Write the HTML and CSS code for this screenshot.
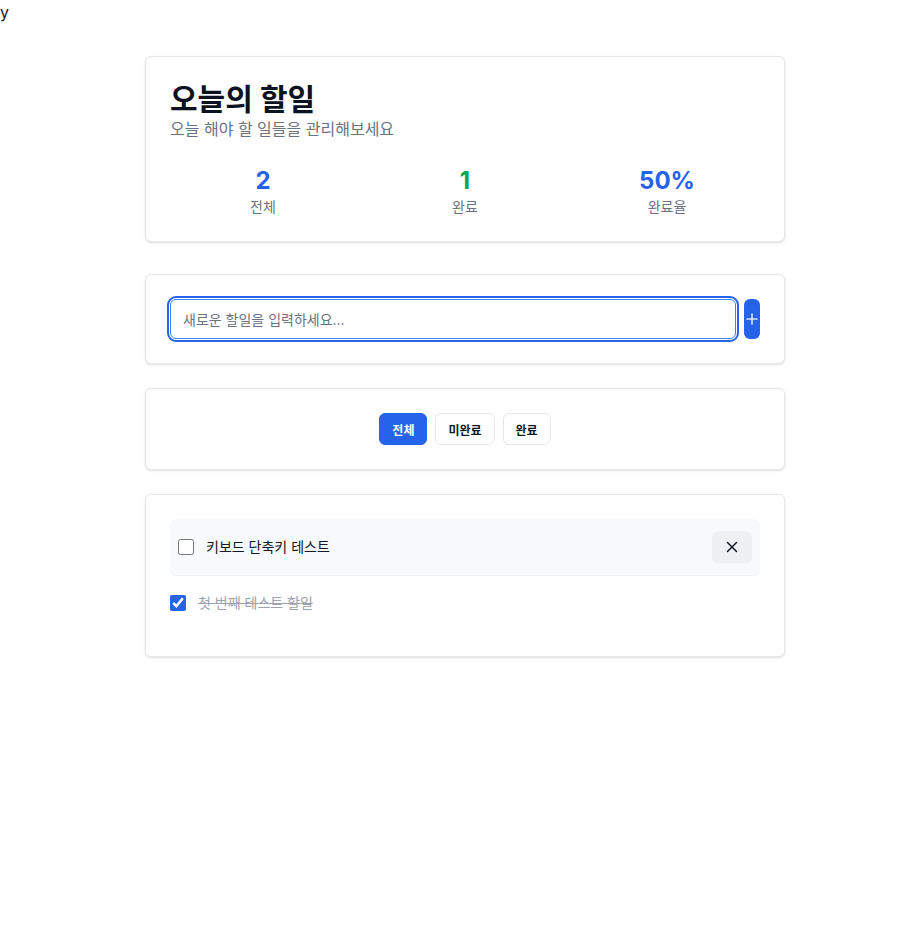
FILE: index.html
```html
<!DOCTYPE html>
<html lang="ko">
<head>
<meta charset="utf-8">
<title>오늘의 할일</title>
<link rel="stylesheet" href="styles.css">
</head>
<body>
<div class="stray">y</div>
<div class="page">
  <main class="container">
    <section class="card header-card">
      <div class="header">
        <h1 class="title">오늘의 할일</h1>
        <p class="subtitle">오늘 해야 할 일들을 관리해보세요</p>
      </div>
      <div class="stats">
        <div class="stat">
          <div class="stat-num blue">2</div>
          <div class="stat-label">전체</div>
        </div>
        <div class="stat">
          <div class="stat-num green">1</div>
          <div class="stat-label">완료</div>
        </div>
        <div class="stat">
          <div class="stat-num blue">50%</div>
          <div class="stat-label">완료율</div>
        </div>
      </div>
    </section>

    <section class="card">
      <form class="add-form">
        <input class="add-input" type="text" placeholder="새로운 할일을 입력하세요..." autofocus>
        <button class="add-btn" type="button" aria-label="추가">
          <svg width="12" height="12" viewBox="0 0 12 12" fill="none" stroke="#dbe6ff" stroke-width="1.6" stroke-linecap="round"><path d="M6 1v10M1 6h10"/></svg>
        </button>
      </form>
    </section>

    <section class="card">
      <div class="filters">
        <button class="filter active" type="button">전체</button>
        <button class="filter" type="button">미완료</button>
        <button class="filter" type="button">완료</button>
      </div>
    </section>

    <section class="card">
      <ul class="list">
        <li class="item hover">
          <input class="check" type="checkbox">
          <span class="item-text">키보드 단축키 테스트</span>
          <button class="del" type="button" aria-label="삭제">
            <svg width="12" height="12" viewBox="0 0 12 12" fill="none" stroke="#111827" stroke-width="1.5" stroke-linecap="round"><path d="M1.5 1.5l9 9M10.5 1.5l-9 9"/></svg>
          </button>
        </li>
        <li class="item done">
          <input class="check" type="checkbox" checked>
          <span class="item-text">첫 번째 테스트 할일</span>
        </li>
      </ul>
    </section>
  </main>
</div>
</body>
</html>
```

FILE: styles.css
```css
* { box-sizing: border-box; }

body {
  margin: 0;
  font-family: "Inter", "Noto Sans CJK KR", sans-serif;
  color: #111827;
  background: #ffffff;
}

.stray {
  font-size: 16px;
  line-height: 24px;
  height: 24px;
}

.page {
  display: flex;
  justify-content: center;
  padding: 32px 0 32px 16px;
}

.container {
  width: 640px;
  display: flex;
  flex-direction: column;
  gap: 24px;
}

.card {
  background: #fff;
  border: 1px solid #e5e7eb;
  border-radius: 6px;
  box-shadow: 0 1px 3px rgba(0,0,0,0.10), 0 1px 2px -1px rgba(0,0,0,0.10);
  padding: 24px;
}

.header-card { margin-bottom: 8px; }

.header { margin-bottom: 24px; }

.title {
  margin: 0;
  font-size: 30px;
  line-height: 36px;
  font-weight: 700;
  color: #0b1220;
}

.subtitle {
  margin: 0;
  font-size: 16px;
  line-height: 24px;
  color: #6b7280;
}

.stats {
  display: grid;
  grid-template-columns: repeat(3, 1fr);
  gap: 16px;
  text-align: center;
}

.stat-num {
  font-size: 24px;
  line-height: 32px;
  font-weight: 700;
}

.blue { color: #2563eb; }
.green { color: #16a34a; }

.stat-label {
  font-size: 14px;
  line-height: 20px;
  color: #6b7280;
}

.add-form {
  display: flex;
  gap: 8px;
  margin: 0;
}

.add-input {
  flex: 1;
  height: 40px;
  padding: 0 12px;
  border: 1px solid #3b82f6;
  border-radius: 6px;
  font-family: inherit;
  font-size: 14px;
  color: #111827;
  outline: 2px solid #2563eb;
  outline-offset: 1px;
}

.add-input::placeholder { color: #6b7280; }

.add-btn {
  width: 16px;
  height: 40px;
  padding: 0;
  border: 0;
  border-radius: 6px;
  background: #2563eb;
  display: flex;
  align-items: center;
  justify-content: center;
}

.filters {
  display: flex;
  justify-content: center;
  gap: 8px;
}

.filter {
  height: 32px;
  padding: 0 12px;
  border: 1px solid #e5e7eb;
  border-radius: 6px;
  background: #fff;
  font-family: inherit;
  font-size: 12px;
  font-weight: 700;
  color: #111827;
}

.filter.active {
  background: #2563eb;
  border-color: #2563eb;
  color: #fff;
}

.list {
  list-style: none;
  margin: 0;
  padding: 0 0 13px;
  display: flex;
  flex-direction: column;
  gap: 12px;
}

.item {
  display: flex;
  align-items: center;
  gap: 12px;
  font-size: 14px;
  line-height: 20px;
}

.item.hover {
  background: #f8f9fb;
  border-radius: 6px;
  padding: 12px 8px;
  box-shadow: 0 1px 1px rgba(0,0,0,0.06);
}

.item.done { height: 32px; }

.check {
  width: 16px;
  height: 16px;
  margin: 0;
  accent-color: #2563eb;
  flex: none;
}

.item-text { flex: 1; color: #111827; }

.done .item-text {
  color: #9ca3af;
  text-decoration: line-through;
}

.del {
  width: 40px;
  height: 32px;
  border: 0;
  border-radius: 6px;
  background: #eef0f4;
  display: flex;
  align-items: center;
  justify-content: center;
  padding: 0;
}
```
